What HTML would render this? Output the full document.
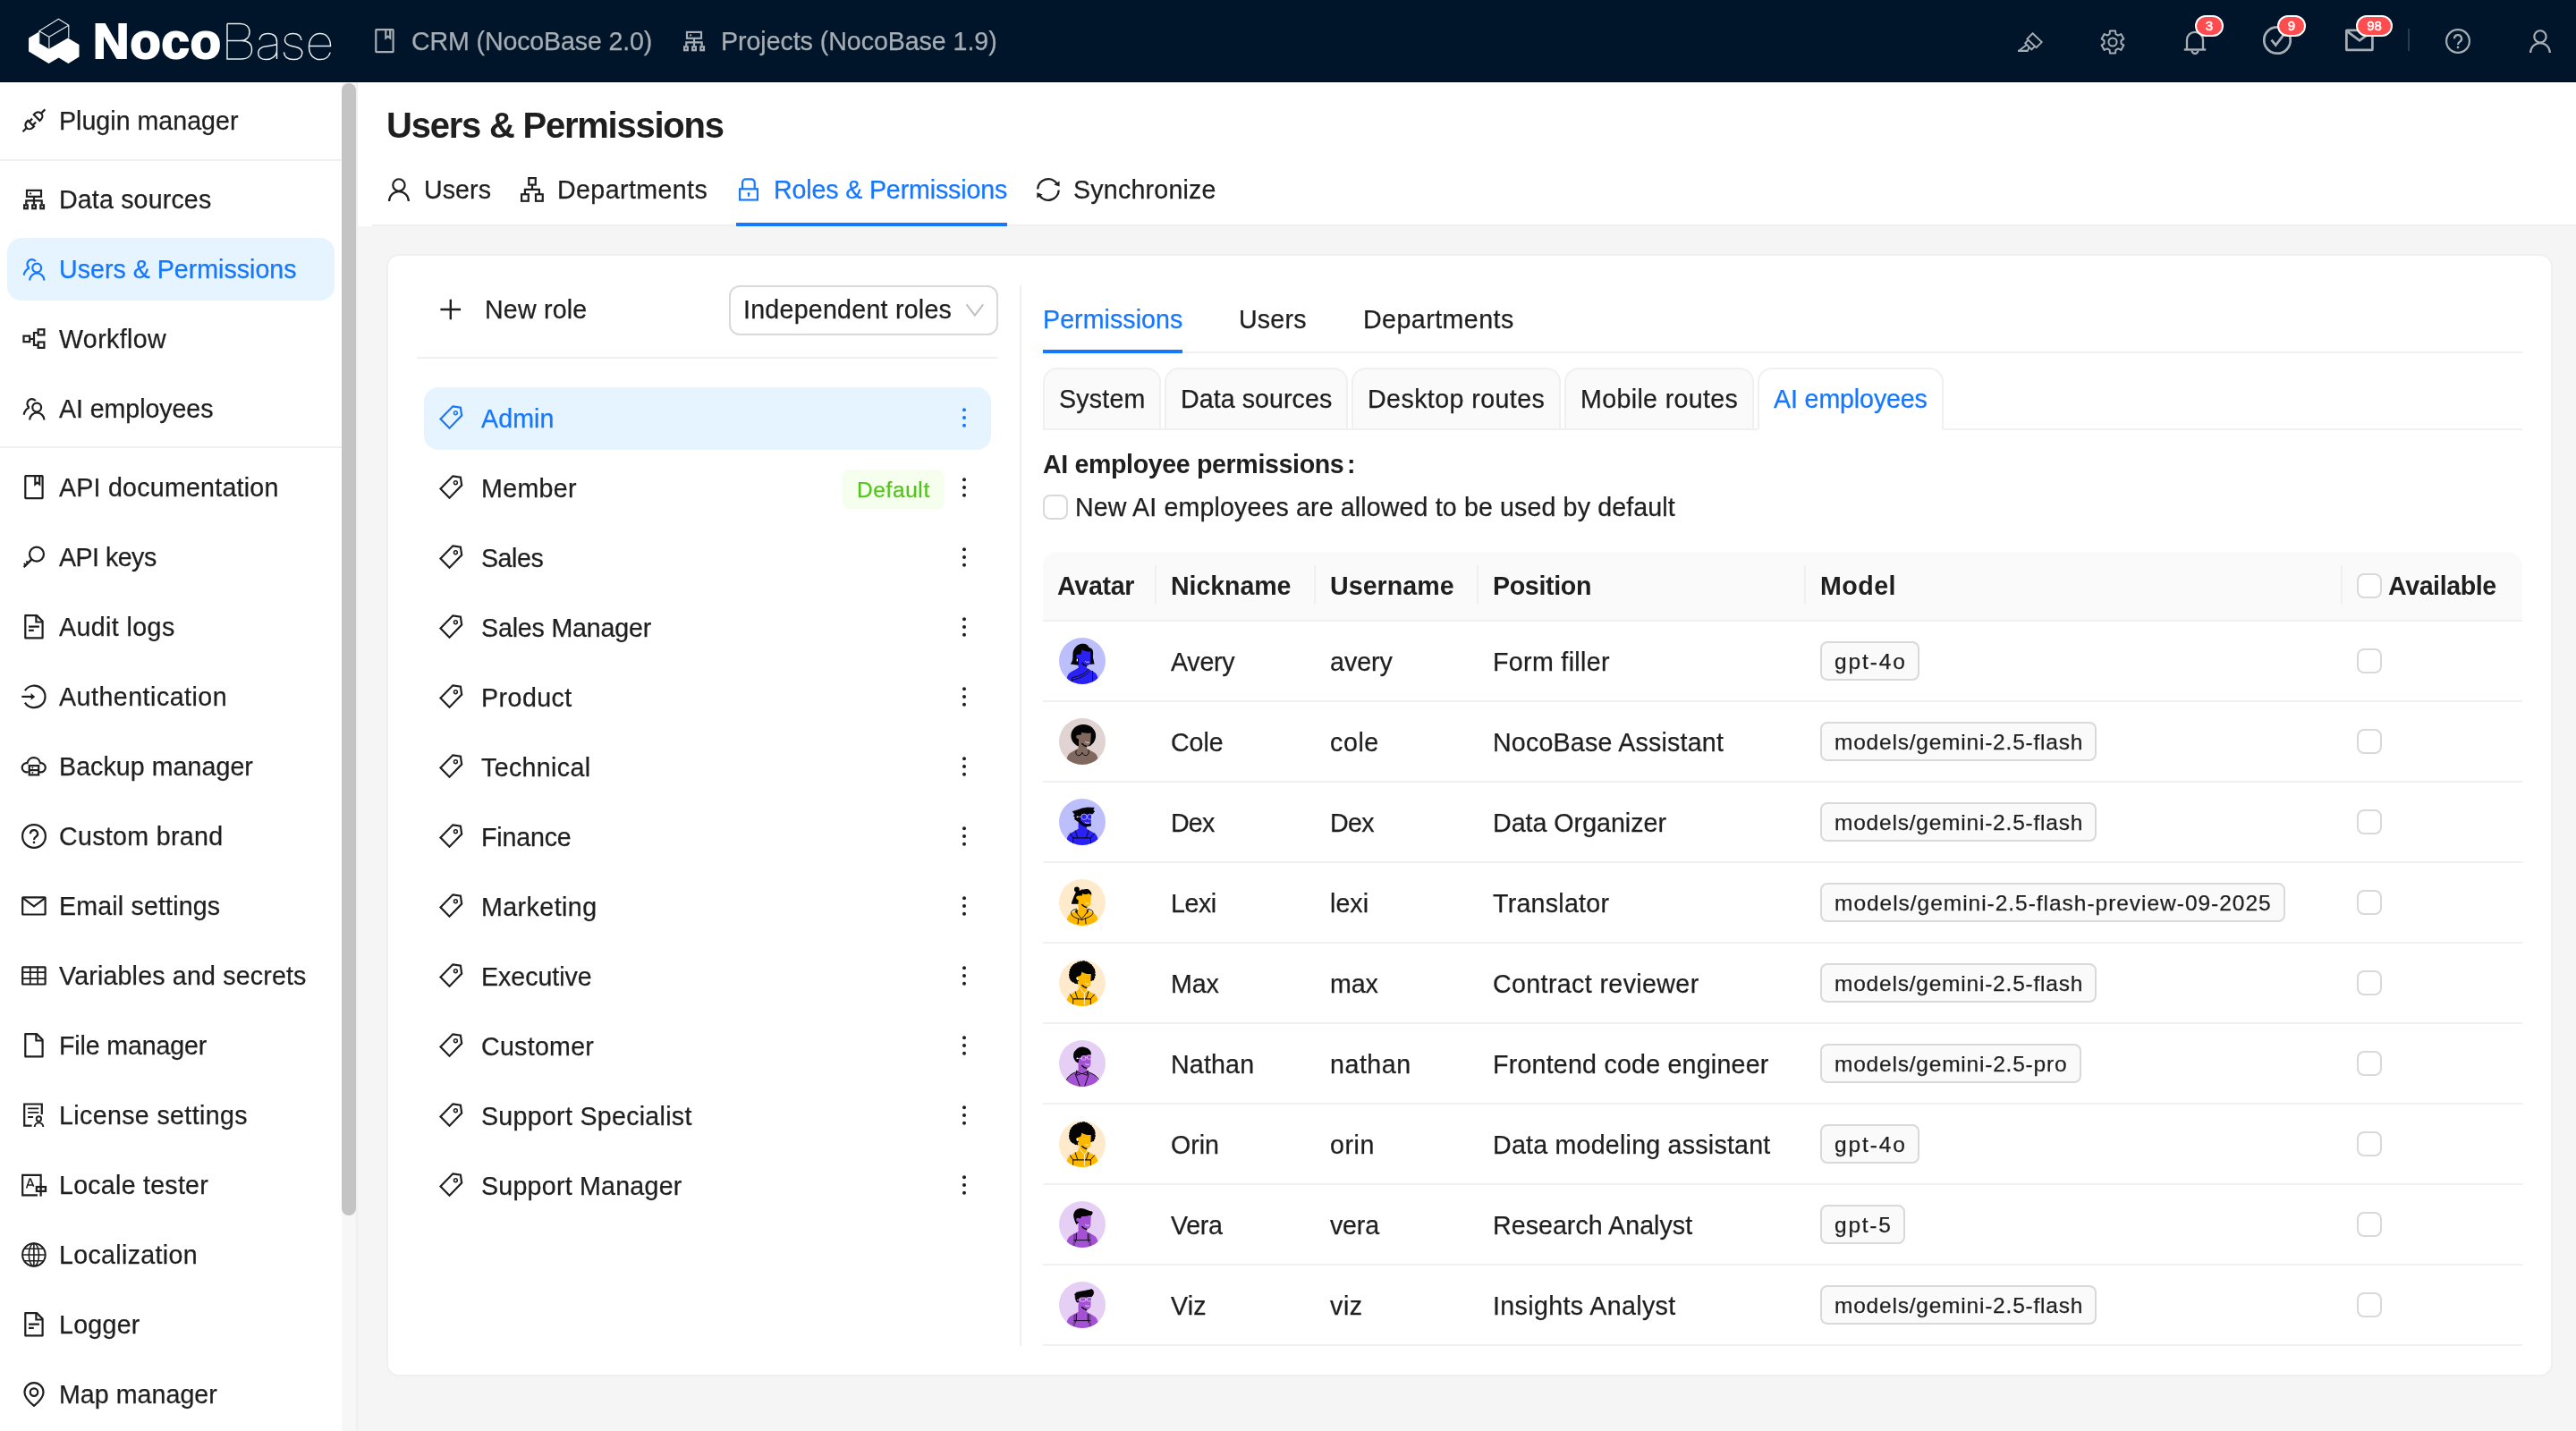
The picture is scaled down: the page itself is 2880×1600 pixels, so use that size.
<!DOCTYPE html>
<html lang="en"><head><meta charset="utf-8"><title>Users &amp; Permissions - NocoBase</title><style>
html,body{margin:0;padding:0;}
body{width:2880px;height:1600px;position:relative;overflow:hidden;background:#f5f5f5;font-family:"Liberation Sans",sans-serif;}
div,svg{position:absolute;box-sizing:border-box;}
svg{overflow:visible;}
.t{white-space:nowrap;will-change:transform;}
</style></head>
<body>
<div style="left:0px;top:0px;width:2880px;height:92px;background:#001529;"></div>
<div style="left:0px;top:91px;width:2880px;height:1px;background:#000b1d;"></div>
<svg style="left:28px;top:16px" width="64" height="60" viewBox="0 0 64 60"><path d="M4.100 26.600L15.760 19.600V32.200L26.700 38.700L47.900 26.600L60.500 34.100V47.600L48.400 55L37.650 48.500L26.500 55L4.100 41.500Z" fill="#fff"/><path d="M15.760 18.700L37.400 5.200L48.800 12.200L26.900 25.200ZM48.800 12.200V26.600M26.900 25.200V38.700M15.760 18.700V32.200" fill="none" stroke="#e3e7ea" stroke-width="1.200" stroke-linejoin="round"/></svg>
<div class="t" style="left:103.86px;top:7px;height:78px;line-height:78px;font-size:56px;color:#fff;font-weight:700;letter-spacing:0.967px;-webkit-text-stroke:2.2px #fff;">Noco</div>
<svg style="left:250px;top:20px" width="124" height="52" viewBox="0 0 124 52" fill="none" stroke="#e8ebee" stroke-width="1.500"><path d="M4 6.500V46H19.500C27 46 31.500 42 31.500 35.500C31.500 29.500 27.500 25.700 20.500 25.500H4M4 6.500H18.500C25 6.500 29 10 29 15.800C29 21.800 25 25.500 18.500 25.500"/><path d="M40 24.500C41 20 44.500 17.600 49.500 17.600C56 17.600 59.500 21 59.500 27V46M59.500 29.500C56 30.800 51.500 31.200 47.500 31.800C42 32.600 38.700 34.800 38.700 39.200C38.700 43.800 42.200 46.600 47.400 46.600C53.500 46.600 59.500 43 59.500 36"/><path d="M87 25C86.500 20.400 83 17.600 77.500 17.600C72 17.600 68.400 20.400 68.400 24.500C68.400 28.500 71 30.300 76 31.400L80.500 32.400C85.500 33.500 87.800 35.400 87.800 39.200C87.800 43.600 84 46.600 78 46.600C71.800 46.600 68 43.600 67.400 38.400"/><path d="M95.500 31.500H119.500C119.500 23 115 17.600 107.800 17.600C100.500 17.600 95.500 23.500 95.500 32.200C95.500 41 100.500 46.600 108 46.600C113.800 46.600 117.800 43.500 119.200 38.600"/></svg>
<svg style="left:416px;top:32px;color:#a6adb4;" width="28" height="28" viewBox="0 0 28 28" fill="none" stroke="currentColor" stroke-width="2.2" stroke-linecap="butt" stroke-linejoin="miter"><rect x="4.300" y="1.200" width="19.300" height="25" rx=".6"/><path d="M15.300 1.200V10.600L17.750 8.700L20.200 10.600V1.200"/></svg>
<div class="t" style="left:459.77px;top:26px;height:40px;line-height:40px;font-size:28.6px;color:#a6adb4;-webkit-text-stroke:.25px;letter-spacing:-0.141px;">CRM (NocoBase 2.0)</div>
<svg style="left:762px;top:32px;color:#a6adb4;" width="28" height="28" viewBox="0 0 28 28" fill="none" stroke="currentColor" stroke-width="2.2" stroke-linecap="butt" stroke-linejoin="miter"><rect x="6" y="3.900" width="16" height="6.900"/><circle cx="10.100" cy="7.400" r="1.100" fill="currentColor" stroke="none"/><path d="M14 10.800V15.300M5.300 19.400V15.300H22.700V19.400M14 15.300V19.400"/><rect x="3.100" y="20.300" width="3.700" height="3.900"/><rect x="12.200" y="20.300" width="3.700" height="3.900"/><rect x="21.300" y="20.300" width="3.700" height="3.900"/></svg>
<div class="t" style="left:805.91px;top:26px;height:40px;line-height:40px;font-size:28.6px;color:#a6adb4;-webkit-text-stroke:.25px;letter-spacing:-0.055px;">Projects (NocoBase 1.9)</div>
<svg style="left:2250px;top:28px;color:#a6adb4" width="40" height="36" viewBox="0 0 40 36" fill="none" stroke="currentColor" stroke-width="1.900" stroke-linejoin="miter"><path d="M22.500 9.300L32.700 19.050L26.600 25.250L16.400 15.500Z"/><path d="M17.650 16.750L14.200 20.200L21.400 27.400L24.850 23.950"/><path d="M15.600 22.300L7.800 28.300M18.200 25.200L17.300 28.300"/><path d="M6 28.850H17.700" stroke-width="2.300"/></svg>
<svg style="left:2348px;top:33px;color:#a6adb4;" width="28" height="28" viewBox="0 0 28 28" fill="none" stroke="currentColor" stroke-width="2" stroke-linecap="butt" stroke-linejoin="miter"><path d="M10.62 5.02L10.93 1.47L17.07 1.47L17.38 5.02L20.09 6.58L23.32 5.08L26.38 10.39L23.47 12.44L23.47 15.56L26.38 17.61L23.32 22.92L20.09 21.42L17.38 22.98L17.07 26.53L10.93 26.53L10.62 22.98L7.91 21.42L4.68 22.92L1.62 17.61L4.53 15.56L4.53 12.44L1.62 10.39L4.68 5.08L7.91 6.58Z" stroke-linejoin="round"/><circle cx="14" cy="14" r="4.600"/></svg>
<svg style="left:2440px;top:32px;color:#a6adb4;" width="28" height="28" viewBox="0 0 28 28" fill="none" stroke="currentColor" stroke-width="2.3" stroke-linecap="butt" stroke-linejoin="miter"><path d="M5 23.300V12.800a9 9 0 0 1 18 0V23.300"/><path d="M1.800 23.500H26.200" stroke-width="2.400"/><path d="M10.600 24.600a3.400 3.400 0 0 0 6.800 0"/></svg>
<svg style="left:2530px;top:29px;color:#a6adb4;" width="32" height="32" viewBox="0 0 28 28" fill="none" stroke="currentColor" stroke-width="2.4" stroke-linecap="butt" stroke-linejoin="miter"><circle cx="14" cy="14" r="12.900"/><path d="M8.300 13.600L12.500 18.800L20.300 8.700"/></svg>
<svg style="left:2622px;top:29px;color:#a6adb4;" width="32" height="32" viewBox="0 0 28 28" fill="none" stroke="currentColor" stroke-width="2.4" stroke-linecap="butt" stroke-linejoin="miter"><rect x="1.200" y="4.300" width="25.400" height="19.200" rx=".5"/><path d="M2 5.300L14 14.300L26 5.300"/></svg>
<div style="left:2692px;top:32px;width:2px;height:25px;background:#2b3a4c;"></div>
<svg style="left:2734px;top:32px;color:#a6adb4;" width="28" height="28" viewBox="0 0 28 28" fill="none" stroke="currentColor" stroke-width="2.2" stroke-linecap="butt" stroke-linejoin="miter"><circle cx="14" cy="14" r="12.900"/><path d="M9.900 11.200a4.100 4.100 0 1 1 6.100 3.600c-1.300.8-1.900 1.500-1.900 2.900v.4"/><circle cx="14" cy="20.900" r="1.300" fill="currentColor" stroke="none"/></svg>
<svg style="left:2826px;top:32px;color:#a6adb4;" width="28" height="28" viewBox="0 0 28 28" fill="none" stroke="currentColor" stroke-width="2.2" stroke-linecap="butt" stroke-linejoin="miter"><circle cx="13.950" cy="8.900" r="6.650"/><path d="M3.100 27A10.850 10.850 0 0 1 24.800 27"/></svg>
<div style="left:2454px;top:17px;width:32px;height:24px;background:#ff4d4f;border:2px solid #fff;border-radius:12px;"></div>
<div class="t" style="left:2454px;top:19px;width:32px;height:20px;line-height:20px;text-align:center;font-size:15px;font-weight:400;-webkit-text-stroke:.5px #fff;color:#fff;">3</div>
<div style="left:2546px;top:17px;width:32px;height:24px;background:#ff4d4f;border:2px solid #fff;border-radius:12px;"></div>
<div class="t" style="left:2546px;top:19px;width:32px;height:20px;line-height:20px;text-align:center;font-size:15px;font-weight:400;-webkit-text-stroke:.5px #fff;color:#fff;">9</div>
<div style="left:2634px;top:17px;width:41px;height:24px;background:#ff4d4f;border:2px solid #fff;border-radius:12px;"></div>
<div class="t" style="left:2634px;top:19px;width:41px;height:20px;line-height:20px;text-align:center;font-size:15px;font-weight:400;-webkit-text-stroke:.5px #fff;color:#fff;">98</div>
<div style="left:0px;top:92px;width:400px;height:1508px;background:#fff;"></div>
<div style="left:382px;top:92px;width:16px;height:1508px;background:#f7f7f7;"></div>
<div style="left:398px;top:92px;width:2px;height:1508px;background:#efefef;"></div>
<div style="left:382px;top:93px;width:16px;height:1266px;background:#c4c4c4;border-radius:8px;"></div>
<div style="left:0px;top:178px;width:382px;height:2px;background:#f0f0f0;"></div>
<div style="left:0px;top:499px;width:382px;height:2px;background:#f0f0f0;"></div>
<svg style="left:24px;top:121px;color:#1f1f1f;" width="28" height="28" viewBox="0 0 28 28" fill="none" stroke="currentColor" stroke-width="2.2" stroke-linecap="butt" stroke-linejoin="miter"><g transform="translate(13.9 13.8) rotate(-45)"><path d="M4.600 -4.700V4.700H6.600A4.900 4.700 0 0 0 6.600 -4.700Z"/><path d="M-4.600 -4.700V4.700H-6.600A4.900 4.700 0 0 1 -6.600 -4.700Z"/><path d="M12.300 0H17.600M-12.300 0H-17.600M-4.600 -2.800H0.300M-4.600 2.800H0.300"/></g></svg>
<div class="t" style="left:65.80px;top:115px;height:40px;line-height:40px;font-size:28.6px;color:#1f1f1f;-webkit-text-stroke:.25px;letter-spacing:0.010px;">Plugin manager</div>
<svg style="left:24px;top:209px;color:#1f1f1f;" width="28" height="28" viewBox="0 0 28 28" fill="none" stroke="currentColor" stroke-width="2.2" stroke-linecap="butt" stroke-linejoin="miter"><rect x="6" y="3.900" width="16" height="6.900"/><circle cx="10.100" cy="7.400" r="1.100" fill="currentColor" stroke="none"/><path d="M14 10.800V15.300M5.300 19.400V15.300H22.700V19.400M14 15.300V19.400"/><rect x="3.100" y="20.300" width="3.700" height="3.900"/><rect x="12.200" y="20.300" width="3.700" height="3.900"/><rect x="21.300" y="20.300" width="3.700" height="3.900"/></svg>
<div class="t" style="left:65.80px;top:203px;height:40px;line-height:40px;font-size:28.6px;color:#1f1f1f;-webkit-text-stroke:.25px;letter-spacing:0.159px;">Data sources</div>
<div style="left:8px;top:266px;width:366px;height:70px;background:#e6f4ff;border-radius:16px;"></div>
<svg style="left:24px;top:287px;color:#1677ff;" width="28" height="28" viewBox="0 0 28 28" fill="none" stroke="currentColor" stroke-width="2.2" stroke-linecap="butt" stroke-linejoin="miter"><circle cx="17.200" cy="12.600" r="4.900"/><path d="M9.200 26.600a8.100 8.100 0 0 1 16.200 0"/><path d="M15.800 5.200A5.200 5.200 0 1 0 8.700 12.600"/><path d="M8.800 12.500C5.400 14.200 3.300 17 2.700 20.700"/></svg>
<div class="t" style="left:65.80px;top:281px;height:40px;line-height:40px;font-size:28.6px;color:#1677ff;-webkit-text-stroke:.25px;letter-spacing:0.011px;">Users &amp; Permissions</div>
<svg style="left:24px;top:365px;color:#1f1f1f;" width="28" height="28" viewBox="0 0 28 28" fill="none" stroke="currentColor" stroke-width="2.2" stroke-linecap="butt" stroke-linejoin="miter"><rect x="2.500" y="10.650" width="6.700" height="6.500"/><path d="M9.200 14H14M18.700 7H14V20.800H18.700"/><rect x="18.700" y="3.300" width="6.700" height="6.200"/><rect x="18.700" y="17.500" width="6.700" height="6.400"/></svg>
<div class="t" style="left:65.80px;top:359px;height:40px;line-height:40px;font-size:28.6px;color:#1f1f1f;-webkit-text-stroke:.25px;letter-spacing:0.383px;">Workflow</div>
<svg style="left:24px;top:443px;color:#1f1f1f;" width="28" height="28" viewBox="0 0 28 28" fill="none" stroke="currentColor" stroke-width="2.2" stroke-linecap="butt" stroke-linejoin="miter"><circle cx="17.200" cy="12.600" r="4.900"/><path d="M9.200 26.600a8.100 8.100 0 0 1 16.200 0"/><path d="M15.800 5.200A5.200 5.200 0 1 0 8.700 12.600"/><path d="M8.800 12.500C5.400 14.200 3.300 17 2.700 20.700"/></svg>
<div class="t" style="left:65.80px;top:437px;height:40px;line-height:40px;font-size:28.6px;color:#1f1f1f;-webkit-text-stroke:.25px;letter-spacing:-0.074px;">AI employees</div>
<svg style="left:24px;top:531px;color:#1f1f1f;" width="28" height="28" viewBox="0 0 28 28" fill="none" stroke="currentColor" stroke-width="2.2" stroke-linecap="butt" stroke-linejoin="miter"><rect x="4.300" y="1.200" width="19.300" height="25" rx=".6"/><path d="M15.300 1.200V10.600L17.750 8.700L20.200 10.600V1.200"/></svg>
<div class="t" style="left:65.80px;top:525px;height:40px;line-height:40px;font-size:28.6px;color:#1f1f1f;-webkit-text-stroke:.25px;letter-spacing:0.234px;">API documentation</div>
<svg style="left:24px;top:609px;color:#1f1f1f;" width="28" height="28" viewBox="0 0 28 28" fill="none" stroke="currentColor" stroke-width="2.2" stroke-linecap="butt" stroke-linejoin="miter"><circle cx="17" cy="10.600" r="8"/><path d="M11.200 16.600L2.600 25.200" stroke-width="2.500"/><path d="M7.400 20.500L5.300 18.400M4.900 23L2.800 20.900" stroke-width="1.900"/></svg>
<div class="t" style="left:65.80px;top:603px;height:40px;line-height:40px;font-size:28.6px;color:#1f1f1f;-webkit-text-stroke:.25px;letter-spacing:-0.518px;">API keys</div>
<svg style="left:24px;top:687px;color:#1f1f1f;" width="28" height="28" viewBox="0 0 28 28" fill="none" stroke="currentColor" stroke-width="2.2" stroke-linecap="butt" stroke-linejoin="miter"><path d="M4.300 1.100H17.100L23.600 7.600V26.300H4.300Z" stroke-linejoin="round"/><path d="M16.400 1.400V8.500H23.400"/><path d="M8 13.600H19.900M8 17.900H13.800"/></svg>
<div class="t" style="left:65.80px;top:681px;height:40px;line-height:40px;font-size:28.6px;color:#1f1f1f;-webkit-text-stroke:.25px;letter-spacing:0.405px;">Audit logs</div>
<svg style="left:24px;top:765px;color:#1f1f1f;" width="28" height="28" viewBox="0 0 28 28" fill="none" stroke="currentColor" stroke-width="2.2" stroke-linecap="butt" stroke-linejoin="miter"><path d="M3.900 7.200A12.300 12.300 0 1 1 3.900 20.600"/><path d="M0.300 13.900H12"/><path d="M10.600 10.100L15.200 13.900L10.600 17.700Z" fill="currentColor" stroke="none"/></svg>
<div class="t" style="left:65.80px;top:759px;height:40px;line-height:40px;font-size:28.6px;color:#1f1f1f;-webkit-text-stroke:.25px;letter-spacing:0.495px;">Authentication</div>
<svg style="left:24px;top:843px;color:#1f1f1f;" width="28" height="28" viewBox="0 0 28 28" fill="none" stroke="currentColor" stroke-width="2.2" stroke-linecap="butt" stroke-linejoin="miter"><path d="M7.600 20.200H7A5.100 5.100 0 1 1 6.500 10.200A7.350 7.350 0 0 1 21 10.200A5.100 5.100 0 1 1 20.500 20.200H19.900"/><rect x="8.750" y="13.100" width="10.450" height="10.300"/><path d="M8.750 18.100H19.200"/><circle cx="12.400" cy="15.500" r=".9" fill="currentColor" stroke="none"/><circle cx="12.400" cy="20.900" r=".9" fill="currentColor" stroke="none"/></svg>
<div class="t" style="left:65.80px;top:837px;height:40px;line-height:40px;font-size:28.6px;color:#1f1f1f;-webkit-text-stroke:.25px;letter-spacing:0.055px;">Backup manager</div>
<svg style="left:24px;top:921px;color:#1f1f1f;" width="28" height="28" viewBox="0 0 28 28" fill="none" stroke="currentColor" stroke-width="2.2" stroke-linecap="butt" stroke-linejoin="miter"><circle cx="14" cy="14" r="12.900"/><path d="M9.900 11.200a4.100 4.100 0 1 1 6.100 3.600c-1.300.8-1.900 1.500-1.900 2.900v.4"/><circle cx="14" cy="20.900" r="1.300" fill="currentColor" stroke="none"/></svg>
<div class="t" style="left:65.80px;top:915px;height:40px;line-height:40px;font-size:28.6px;color:#1f1f1f;-webkit-text-stroke:.25px;letter-spacing:0.319px;">Custom brand</div>
<svg style="left:24px;top:999px;color:#1f1f1f;" width="28" height="28" viewBox="0 0 28 28" fill="none" stroke="currentColor" stroke-width="2.2" stroke-linecap="butt" stroke-linejoin="miter"><rect x="1.200" y="4.300" width="25.400" height="19.200" rx=".5"/><path d="M2 5.300L14 14.300L26 5.300"/></svg>
<div class="t" style="left:65.80px;top:993px;height:40px;line-height:40px;font-size:28.6px;color:#1f1f1f;-webkit-text-stroke:.25px;letter-spacing:0.167px;">Email settings</div>
<svg style="left:24px;top:1077px;color:#1f1f1f;" width="28" height="28" viewBox="0 0 28 28" fill="none" stroke="currentColor" stroke-width="2.2" stroke-linecap="butt" stroke-linejoin="miter"><rect x="1.200" y="4.300" width="25.400" height="19.200" rx=".5"/><path d="M1.200 10.200H26.600M1.200 17.200H26.600M9.800 4.300V23.500M18.150 4.300V23.500" stroke-width="1.800"/></svg>
<div class="t" style="left:65.80px;top:1071px;height:40px;line-height:40px;font-size:28.6px;color:#1f1f1f;-webkit-text-stroke:.25px;letter-spacing:0.178px;">Variables and secrets</div>
<svg style="left:24px;top:1155px;color:#1f1f1f;" width="28" height="28" viewBox="0 0 28 28" fill="none" stroke="currentColor" stroke-width="2.2" stroke-linecap="butt" stroke-linejoin="miter"><path d="M4.300 1.100H17.100L23.600 7.600V26.300H4.300Z" stroke-linejoin="round"/><path d="M16.400 1.400V8.500H23.400"/></svg>
<div class="t" style="left:65.80px;top:1149px;height:40px;line-height:40px;font-size:28.6px;color:#1f1f1f;-webkit-text-stroke:.25px;letter-spacing:-0.154px;">File manager</div>
<svg style="left:24px;top:1233px;color:#1f1f1f;" width="28" height="28" viewBox="0 0 28 28" fill="none" stroke="currentColor" stroke-width="2.2" stroke-linecap="butt" stroke-linejoin="miter"><path d="M11.600 25.600H3.200V1.500H22.800V13"/><path d="M7.100 6.400H19.300M7.100 10.900H19.300M7.100 16H13" stroke-width="1.900"/><circle cx="19.400" cy="18" r="2.700" stroke-width="1.900"/><path d="M14.700 27A4.800 4.800 0 0 1 24.300 27" stroke-width="1.900"/></svg>
<div class="t" style="left:65.80px;top:1227px;height:40px;line-height:40px;font-size:28.6px;color:#1f1f1f;-webkit-text-stroke:.25px;letter-spacing:0.363px;">License settings</div>
<svg style="left:24px;top:1311px;color:#1f1f1f;" width="28" height="28" viewBox="0 0 28 28" fill="none" stroke="currentColor" stroke-width="2.2" stroke-linecap="butt" stroke-linejoin="miter"><path d="M17.900 25.450H1.200V2.900H21.650V10.500"/><path d="M5.600 17.400L9.300 7H10.100L13.600 15.600M7 14H13" stroke-width="1.600"/><rect x="16.900" y="16.050" width="10.100" height="4.800" stroke-width="2.300"/><path d="M21.650 10.500V26.600" stroke-width="2.300"/></svg>
<div class="t" style="left:65.80px;top:1305px;height:40px;line-height:40px;font-size:28.6px;color:#1f1f1f;-webkit-text-stroke:.25px;letter-spacing:0.254px;">Locale tester</div>
<svg style="left:24px;top:1389px;color:#1f1f1f;" width="28" height="28" viewBox="0 0 28 28" fill="none" stroke="currentColor" stroke-width="2.2" stroke-linecap="butt" stroke-linejoin="miter"><circle cx="13.900" cy="14" r="12.800" stroke-width="2"/><ellipse cx="13.900" cy="14" rx="5.600" ry="12.800" stroke-width="1.600"/><path d="M1.100 14H26.700M3.200 7.300H24.600M3.200 20.700H24.600M13.900 1.200V26.800" stroke-width="1.600"/></svg>
<div class="t" style="left:65.80px;top:1383px;height:40px;line-height:40px;font-size:28.6px;color:#1f1f1f;-webkit-text-stroke:.25px;letter-spacing:0.328px;">Localization</div>
<svg style="left:24px;top:1467px;color:#1f1f1f;" width="28" height="28" viewBox="0 0 28 28" fill="none" stroke="currentColor" stroke-width="2.2" stroke-linecap="butt" stroke-linejoin="miter"><path d="M4.300 1.100H17.100L23.600 7.600V26.300H4.300Z" stroke-linejoin="round"/><path d="M16.400 1.400V8.500H23.400"/><path d="M8 13.600H19.900M8 17.900H13.800"/></svg>
<div class="t" style="left:65.80px;top:1461px;height:40px;line-height:40px;font-size:28.6px;color:#1f1f1f;-webkit-text-stroke:.25px;letter-spacing:0.268px;">Logger</div>
<svg style="left:24px;top:1545px;color:#1f1f1f;" width="28" height="28" viewBox="0 0 28 28" fill="none" stroke="currentColor" stroke-width="2.2" stroke-linecap="butt" stroke-linejoin="miter"><path d="M14 26.900C8 22 3.450 17.500 3.450 11.700A10.550 10.550 0 0 1 24.550 11.700C24.550 17.500 20 22 14 26.900Z" stroke-linejoin="round"/><circle cx="14" cy="11.600" r="4.250"/></svg>
<div class="t" style="left:65.80px;top:1539px;height:40px;line-height:40px;font-size:28.6px;color:#1f1f1f;-webkit-text-stroke:.25px;letter-spacing:0.037px;">Map manager</div>
<div style="left:400px;top:92px;width:2480px;height:161px;background:#fff;"></div>
<div style="left:416px;top:251px;width:2464px;height:2px;background:#f0f0f0;"></div>
<div class="t" style="left:431.60px;top:112px;height:56px;line-height:56px;font-size:40px;color:#1f1f1f;font-weight:700;letter-spacing:-1.233px;">Users &amp; Permissions</div>
<svg style="left:432px;top:198px;color:#1f1f1f;" width="28" height="28" viewBox="0 0 28 28" fill="none" stroke="currentColor" stroke-width="2.2" stroke-linecap="butt" stroke-linejoin="miter"><circle cx="13.950" cy="8.900" r="6.650"/><path d="M3.100 27A10.850 10.850 0 0 1 24.800 27"/></svg>
<div class="t" style="left:473.70px;top:192px;height:40px;line-height:40px;font-size:28.6px;color:#1f1f1f;-webkit-text-stroke:.25px;letter-spacing:0.064px;">Users</div>
<svg style="left:581px;top:198px;color:#1f1f1f;" width="28" height="28" viewBox="0 0 28 28" fill="none" stroke="currentColor" stroke-width="2.2" stroke-linecap="butt" stroke-linejoin="miter"><rect x="10.250" y="1.100" width="7.500" height="7.500"/><rect x="2.100" y="19.260" width="7.660" height="7.500"/><rect x="18" y="19.260" width="7.750" height="7.500"/><path d="M14 8.600V13.900M5.930 19.260V13.900H21.870V19.260"/></svg>
<div class="t" style="left:622.70px;top:192px;height:40px;line-height:40px;font-size:28.6px;color:#1f1f1f;-webkit-text-stroke:.25px;letter-spacing:0.407px;">Departments</div>
<svg style="left:823px;top:198px;color:#1677ff;" width="28" height="28" viewBox="0 0 28 28" fill="none" stroke="currentColor" stroke-width="2.2" stroke-linecap="butt" stroke-linejoin="miter"><rect x="4.100" y="13.300" width="19.800" height="12.200"/><path d="M7.050 13.300V6A3.650 3.650 0 0 1 10.700 2.350H17.050A3.650 3.650 0 0 1 20.700 6V13.300"/><circle cx="14.050" cy="18.600" r="1.500" fill="currentColor" stroke="none"/><path d="M14.050 18.600V21.800" stroke-width="2"/></svg>
<div class="t" style="left:864.70px;top:192px;height:40px;line-height:40px;font-size:28.6px;color:#1677ff;-webkit-text-stroke:.25px;letter-spacing:-0.141px;">Roles &amp; Permissions</div>
<div style="left:823px;top:249px;width:303px;height:4px;background:#1677ff;"></div>
<svg style="left:1158px;top:198px;color:#1f1f1f;" width="28" height="28" viewBox="0 0 28 28" fill="none" stroke="currentColor" stroke-width="2.2" stroke-linecap="butt" stroke-linejoin="miter"><path d="M2.170 13.330A11.800 11.800 0 0 1 23.600 7.180" stroke-width="2.400"/><path d="M25.730 14.570A11.800 11.800 0 0 1 4.300 20.720" stroke-width="2.400"/><path d="M26.550 4.400V10.600L20.300 8.400Z" fill="currentColor" stroke="none"/><path d="M1.350 23.500V17.300L7.600 19.500Z" fill="currentColor" stroke="none"/></svg>
<div class="t" style="left:1199.70px;top:192px;height:40px;line-height:40px;font-size:28.6px;color:#1f1f1f;-webkit-text-stroke:.25px;letter-spacing:0.214px;">Synchronize</div>
<div style="left:432px;top:284px;width:2422px;height:1255px;background:#fff;border:2px solid #f0f0f0;border-radius:14px;"></div>
<svg style="left:490px;top:332px;color:#1f1f1f;" width="28" height="28" viewBox="0 0 28 28" fill="none" stroke="currentColor" stroke-width="2.4" stroke-linecap="butt" stroke-linejoin="miter"><path d="M13.800 2.700V25.300M2.400 14H25.100"/></svg>
<div class="t" style="left:541.91px;top:326px;height:40px;line-height:40px;font-size:28.6px;color:#1f1f1f;-webkit-text-stroke:.25px;letter-spacing:0.201px;">New role</div>
<div style="left:815px;top:319px;width:301px;height:56px;background:#fff;border:2px solid #d9d9d9;border-radius:12px;"></div>
<div class="t" style="left:830.63px;top:326px;height:40px;line-height:40px;font-size:28.6px;color:#1f1f1f;-webkit-text-stroke:.25px;letter-spacing:0.246px;">Independent roles</div>
<svg style="left:1076px;top:336px" width="28" height="22" viewBox="0 0 28 22" fill="none" stroke="#bfbfbf" stroke-width="2"><path d="M4.600 4.400L13.900 16.700L23.200 4.400"/></svg>
<div style="left:466px;top:399px;width:650px;height:2px;background:#f0f0f0;"></div>
<div style="left:1140px;top:319px;width:2px;height:1186px;background:#f0f0f0;"></div>
<div style="left:474px;top:433px;width:634px;height:70px;background:#e6f4ff;border-radius:16px;"></div>
<svg style="left:490px;top:453px;color:#1677ff;" width="28" height="28" viewBox="0 0 28 28" fill="none" stroke="currentColor" stroke-width="2.2" stroke-linecap="butt" stroke-linejoin="miter"><path d="M2.500 15.400L16.300 1.300L24.900 2.600L26.200 11.600L12.500 25.700Z" stroke-linejoin="miter"/><circle cx="19.400" cy="8.750" r="1.900" stroke-width="1.500"/></svg>
<div class="t" style="left:537.80px;top:448px;height:40px;line-height:40px;font-size:28.6px;color:#1677ff;-webkit-text-stroke:.25px;letter-spacing:0.109px;">Admin</div>
<svg style="left:1064px;top:453px;color:#1677ff;" width="28" height="28" viewBox="0 0 28 28" fill="none" stroke="currentColor" stroke-width="2.2" stroke-linecap="butt" stroke-linejoin="miter"><circle cx="14" cy="5.300" r="2" fill="currentColor" stroke="none"/><circle cx="14" cy="14" r="2" fill="currentColor" stroke="none"/><circle cx="14" cy="22.700" r="2" fill="currentColor" stroke="none"/></svg>
<svg style="left:490px;top:531px;color:#1f1f1f;" width="28" height="28" viewBox="0 0 28 28" fill="none" stroke="currentColor" stroke-width="2.2" stroke-linecap="butt" stroke-linejoin="miter"><path d="M2.500 15.400L16.300 1.300L24.900 2.600L26.200 11.600L12.500 25.700Z" stroke-linejoin="miter"/><circle cx="19.400" cy="8.750" r="1.900" stroke-width="1.500"/></svg>
<div class="t" style="left:537.80px;top:526px;height:40px;line-height:40px;font-size:28.6px;color:#1f1f1f;-webkit-text-stroke:.25px;letter-spacing:0.353px;">Member</div>
<svg style="left:1064px;top:531px;color:#1f1f1f;" width="28" height="28" viewBox="0 0 28 28" fill="none" stroke="currentColor" stroke-width="2.2" stroke-linecap="butt" stroke-linejoin="miter"><circle cx="14" cy="5.300" r="2" fill="currentColor" stroke="none"/><circle cx="14" cy="14" r="2" fill="currentColor" stroke="none"/><circle cx="14" cy="22.700" r="2" fill="currentColor" stroke="none"/></svg>
<div style="left:942px;top:525px;width:114px;height:44px;background:#f6ffed;border-radius:8px;"></div>
<div class="t" style="left:958.05px;top:531px;height:34px;line-height:34px;font-size:24.4px;color:#52c41a;-webkit-text-stroke:.25px;letter-spacing:0.654px;">Default</div>
<svg style="left:490px;top:609px;color:#1f1f1f;" width="28" height="28" viewBox="0 0 28 28" fill="none" stroke="currentColor" stroke-width="2.2" stroke-linecap="butt" stroke-linejoin="miter"><path d="M2.500 15.400L16.300 1.300L24.900 2.600L26.200 11.600L12.500 25.700Z" stroke-linejoin="miter"/><circle cx="19.400" cy="8.750" r="1.900" stroke-width="1.500"/></svg>
<div class="t" style="left:537.80px;top:604px;height:40px;line-height:40px;font-size:28.6px;color:#1f1f1f;-webkit-text-stroke:.25px;letter-spacing:-0.450px;">Sales</div>
<svg style="left:1064px;top:609px;color:#1f1f1f;" width="28" height="28" viewBox="0 0 28 28" fill="none" stroke="currentColor" stroke-width="2.2" stroke-linecap="butt" stroke-linejoin="miter"><circle cx="14" cy="5.300" r="2" fill="currentColor" stroke="none"/><circle cx="14" cy="14" r="2" fill="currentColor" stroke="none"/><circle cx="14" cy="22.700" r="2" fill="currentColor" stroke="none"/></svg>
<svg style="left:490px;top:687px;color:#1f1f1f;" width="28" height="28" viewBox="0 0 28 28" fill="none" stroke="currentColor" stroke-width="2.2" stroke-linecap="butt" stroke-linejoin="miter"><path d="M2.500 15.400L16.300 1.300L24.900 2.600L26.200 11.600L12.500 25.700Z" stroke-linejoin="miter"/><circle cx="19.400" cy="8.750" r="1.900" stroke-width="1.500"/></svg>
<div class="t" style="left:537.80px;top:682px;height:40px;line-height:40px;font-size:28.6px;color:#1f1f1f;-webkit-text-stroke:.25px;letter-spacing:-0.171px;">Sales Manager</div>
<svg style="left:1064px;top:687px;color:#1f1f1f;" width="28" height="28" viewBox="0 0 28 28" fill="none" stroke="currentColor" stroke-width="2.2" stroke-linecap="butt" stroke-linejoin="miter"><circle cx="14" cy="5.300" r="2" fill="currentColor" stroke="none"/><circle cx="14" cy="14" r="2" fill="currentColor" stroke="none"/><circle cx="14" cy="22.700" r="2" fill="currentColor" stroke="none"/></svg>
<svg style="left:490px;top:765px;color:#1f1f1f;" width="28" height="28" viewBox="0 0 28 28" fill="none" stroke="currentColor" stroke-width="2.2" stroke-linecap="butt" stroke-linejoin="miter"><path d="M2.500 15.400L16.300 1.300L24.900 2.600L26.200 11.600L12.500 25.700Z" stroke-linejoin="miter"/><circle cx="19.400" cy="8.750" r="1.900" stroke-width="1.500"/></svg>
<div class="t" style="left:537.80px;top:760px;height:40px;line-height:40px;font-size:28.6px;color:#1f1f1f;-webkit-text-stroke:.25px;letter-spacing:0.462px;">Product</div>
<svg style="left:1064px;top:765px;color:#1f1f1f;" width="28" height="28" viewBox="0 0 28 28" fill="none" stroke="currentColor" stroke-width="2.2" stroke-linecap="butt" stroke-linejoin="miter"><circle cx="14" cy="5.300" r="2" fill="currentColor" stroke="none"/><circle cx="14" cy="14" r="2" fill="currentColor" stroke="none"/><circle cx="14" cy="22.700" r="2" fill="currentColor" stroke="none"/></svg>
<svg style="left:490px;top:843px;color:#1f1f1f;" width="28" height="28" viewBox="0 0 28 28" fill="none" stroke="currentColor" stroke-width="2.2" stroke-linecap="butt" stroke-linejoin="miter"><path d="M2.500 15.400L16.300 1.300L24.900 2.600L26.200 11.600L12.500 25.700Z" stroke-linejoin="miter"/><circle cx="19.400" cy="8.750" r="1.900" stroke-width="1.500"/></svg>
<div class="t" style="left:537.80px;top:838px;height:40px;line-height:40px;font-size:28.6px;color:#1f1f1f;-webkit-text-stroke:.25px;letter-spacing:0.350px;">Technical</div>
<svg style="left:1064px;top:843px;color:#1f1f1f;" width="28" height="28" viewBox="0 0 28 28" fill="none" stroke="currentColor" stroke-width="2.2" stroke-linecap="butt" stroke-linejoin="miter"><circle cx="14" cy="5.300" r="2" fill="currentColor" stroke="none"/><circle cx="14" cy="14" r="2" fill="currentColor" stroke="none"/><circle cx="14" cy="22.700" r="2" fill="currentColor" stroke="none"/></svg>
<svg style="left:490px;top:921px;color:#1f1f1f;" width="28" height="28" viewBox="0 0 28 28" fill="none" stroke="currentColor" stroke-width="2.2" stroke-linecap="butt" stroke-linejoin="miter"><path d="M2.500 15.400L16.300 1.300L24.900 2.600L26.200 11.600L12.500 25.700Z" stroke-linejoin="miter"/><circle cx="19.400" cy="8.750" r="1.900" stroke-width="1.500"/></svg>
<div class="t" style="left:537.80px;top:916px;height:40px;line-height:40px;font-size:28.6px;color:#1f1f1f;-webkit-text-stroke:.25px;letter-spacing:-0.172px;">Finance</div>
<svg style="left:1064px;top:921px;color:#1f1f1f;" width="28" height="28" viewBox="0 0 28 28" fill="none" stroke="currentColor" stroke-width="2.2" stroke-linecap="butt" stroke-linejoin="miter"><circle cx="14" cy="5.300" r="2" fill="currentColor" stroke="none"/><circle cx="14" cy="14" r="2" fill="currentColor" stroke="none"/><circle cx="14" cy="22.700" r="2" fill="currentColor" stroke="none"/></svg>
<svg style="left:490px;top:999px;color:#1f1f1f;" width="28" height="28" viewBox="0 0 28 28" fill="none" stroke="currentColor" stroke-width="2.2" stroke-linecap="butt" stroke-linejoin="miter"><path d="M2.500 15.400L16.300 1.300L24.900 2.600L26.200 11.600L12.500 25.700Z" stroke-linejoin="miter"/><circle cx="19.400" cy="8.750" r="1.900" stroke-width="1.500"/></svg>
<div class="t" style="left:537.80px;top:994px;height:40px;line-height:40px;font-size:28.6px;color:#1f1f1f;-webkit-text-stroke:.25px;letter-spacing:0.445px;">Marketing</div>
<svg style="left:1064px;top:999px;color:#1f1f1f;" width="28" height="28" viewBox="0 0 28 28" fill="none" stroke="currentColor" stroke-width="2.2" stroke-linecap="butt" stroke-linejoin="miter"><circle cx="14" cy="5.300" r="2" fill="currentColor" stroke="none"/><circle cx="14" cy="14" r="2" fill="currentColor" stroke="none"/><circle cx="14" cy="22.700" r="2" fill="currentColor" stroke="none"/></svg>
<svg style="left:490px;top:1077px;color:#1f1f1f;" width="28" height="28" viewBox="0 0 28 28" fill="none" stroke="currentColor" stroke-width="2.2" stroke-linecap="butt" stroke-linejoin="miter"><path d="M2.500 15.400L16.300 1.300L24.900 2.600L26.200 11.600L12.500 25.700Z" stroke-linejoin="miter"/><circle cx="19.400" cy="8.750" r="1.900" stroke-width="1.500"/></svg>
<div class="t" style="left:537.80px;top:1072px;height:40px;line-height:40px;font-size:28.6px;color:#1f1f1f;-webkit-text-stroke:.25px;letter-spacing:-0.042px;">Executive</div>
<svg style="left:1064px;top:1077px;color:#1f1f1f;" width="28" height="28" viewBox="0 0 28 28" fill="none" stroke="currentColor" stroke-width="2.2" stroke-linecap="butt" stroke-linejoin="miter"><circle cx="14" cy="5.300" r="2" fill="currentColor" stroke="none"/><circle cx="14" cy="14" r="2" fill="currentColor" stroke="none"/><circle cx="14" cy="22.700" r="2" fill="currentColor" stroke="none"/></svg>
<svg style="left:490px;top:1155px;color:#1f1f1f;" width="28" height="28" viewBox="0 0 28 28" fill="none" stroke="currentColor" stroke-width="2.2" stroke-linecap="butt" stroke-linejoin="miter"><path d="M2.500 15.400L16.300 1.300L24.900 2.600L26.200 11.600L12.500 25.700Z" stroke-linejoin="miter"/><circle cx="19.400" cy="8.750" r="1.900" stroke-width="1.500"/></svg>
<div class="t" style="left:537.80px;top:1150px;height:40px;line-height:40px;font-size:28.6px;color:#1f1f1f;-webkit-text-stroke:.25px;letter-spacing:0.278px;">Customer</div>
<svg style="left:1064px;top:1155px;color:#1f1f1f;" width="28" height="28" viewBox="0 0 28 28" fill="none" stroke="currentColor" stroke-width="2.2" stroke-linecap="butt" stroke-linejoin="miter"><circle cx="14" cy="5.300" r="2" fill="currentColor" stroke="none"/><circle cx="14" cy="14" r="2" fill="currentColor" stroke="none"/><circle cx="14" cy="22.700" r="2" fill="currentColor" stroke="none"/></svg>
<svg style="left:490px;top:1233px;color:#1f1f1f;" width="28" height="28" viewBox="0 0 28 28" fill="none" stroke="currentColor" stroke-width="2.2" stroke-linecap="butt" stroke-linejoin="miter"><path d="M2.500 15.400L16.300 1.300L24.900 2.600L26.200 11.600L12.500 25.700Z" stroke-linejoin="miter"/><circle cx="19.400" cy="8.750" r="1.900" stroke-width="1.500"/></svg>
<div class="t" style="left:537.80px;top:1228px;height:40px;line-height:40px;font-size:28.6px;color:#1f1f1f;-webkit-text-stroke:.25px;letter-spacing:0.287px;">Support Specialist</div>
<svg style="left:1064px;top:1233px;color:#1f1f1f;" width="28" height="28" viewBox="0 0 28 28" fill="none" stroke="currentColor" stroke-width="2.2" stroke-linecap="butt" stroke-linejoin="miter"><circle cx="14" cy="5.300" r="2" fill="currentColor" stroke="none"/><circle cx="14" cy="14" r="2" fill="currentColor" stroke="none"/><circle cx="14" cy="22.700" r="2" fill="currentColor" stroke="none"/></svg>
<svg style="left:490px;top:1311px;color:#1f1f1f;" width="28" height="28" viewBox="0 0 28 28" fill="none" stroke="currentColor" stroke-width="2.2" stroke-linecap="butt" stroke-linejoin="miter"><path d="M2.500 15.400L16.300 1.300L24.900 2.600L26.200 11.600L12.500 25.700Z" stroke-linejoin="miter"/><circle cx="19.400" cy="8.750" r="1.900" stroke-width="1.500"/></svg>
<div class="t" style="left:537.80px;top:1306px;height:40px;line-height:40px;font-size:28.6px;color:#1f1f1f;-webkit-text-stroke:.25px;letter-spacing:0.239px;">Support Manager</div>
<svg style="left:1064px;top:1311px;color:#1f1f1f;" width="28" height="28" viewBox="0 0 28 28" fill="none" stroke="currentColor" stroke-width="2.2" stroke-linecap="butt" stroke-linejoin="miter"><circle cx="14" cy="5.300" r="2" fill="currentColor" stroke="none"/><circle cx="14" cy="14" r="2" fill="currentColor" stroke="none"/><circle cx="14" cy="22.700" r="2" fill="currentColor" stroke="none"/></svg>
<div class="t" style="left:1166.00px;top:337px;height:40px;line-height:40px;font-size:28.6px;color:#1677ff;-webkit-text-stroke:.25px;letter-spacing:0.057px;">Permissions</div>
<div class="t" style="left:1385.20px;top:337px;height:40px;line-height:40px;font-size:28.6px;color:#1f1f1f;-webkit-text-stroke:.25px;letter-spacing:0.189px;">Users</div>
<div class="t" style="left:1524.20px;top:337px;height:40px;line-height:40px;font-size:28.6px;color:#1f1f1f;-webkit-text-stroke:.25px;letter-spacing:0.457px;">Departments</div>
<div style="left:1166px;top:393px;width:1654px;height:2px;background:#f0f0f0;"></div>
<div style="left:1166px;top:391px;width:156px;height:4px;background:#1677ff;"></div>
<div style="left:1166px;top:479px;width:1654px;height:2px;background:#f0f0f0;"></div>
<div style="left:1166px;top:411px;width:132px;height:70px;background:#fafafa;border:2px solid #f0f0f0;border-radius:16px 16px 0 0;"></div>
<div class="t" style="left:1184.00px;top:426px;height:40px;line-height:40px;font-size:28.6px;color:#1f1f1f;-webkit-text-stroke:.25px;letter-spacing:0.196px;">System</div>
<div style="left:1302px;top:411px;width:205px;height:70px;background:#fafafa;border:2px solid #f0f0f0;border-radius:16px 16px 0 0;"></div>
<div class="t" style="left:1320.00px;top:426px;height:40px;line-height:40px;font-size:28.6px;color:#1f1f1f;-webkit-text-stroke:.25px;letter-spacing:0.068px;">Data sources</div>
<div style="left:1511px;top:411px;width:234px;height:70px;background:#fafafa;border:2px solid #f0f0f0;border-radius:16px 16px 0 0;"></div>
<div class="t" style="left:1529.00px;top:426px;height:40px;line-height:40px;font-size:28.6px;color:#1f1f1f;-webkit-text-stroke:.25px;letter-spacing:0.428px;">Desktop routes</div>
<div style="left:1749px;top:411px;width:212px;height:70px;background:#fafafa;border:2px solid #f0f0f0;border-radius:16px 16px 0 0;"></div>
<div class="t" style="left:1767.00px;top:426px;height:40px;line-height:40px;font-size:28.6px;color:#1f1f1f;-webkit-text-stroke:.25px;letter-spacing:0.355px;">Mobile routes</div>
<div style="left:1965px;top:411px;width:208px;height:70px;background:#fff;border:2px solid #f0f0f0;border-radius:16px 16px 0 0;border-bottom-color:#fff;"></div>
<div class="t" style="left:1983.00px;top:426px;height:40px;line-height:40px;font-size:28.6px;color:#1677ff;-webkit-text-stroke:.25px;letter-spacing:-0.120px;">AI employees</div>
<div class="t" style="left:1165.79px;top:499px;height:40px;line-height:40px;font-size:28.6px;color:#1f1f1f;font-weight:700;letter-spacing:-0.368px;">AI employee permissions</div>
<div class="t" style="left:1505.98px;top:499px;height:40px;line-height:40px;font-size:28.6px;color:#1f1f1f;font-weight:700;">:</div>
<div style="left:1166px;top:553px;width:28px;height:28px;background:#fff;border:2px solid #d9d9d9;border-radius:8px;"></div>
<div class="t" style="left:1201.60px;top:547px;height:40px;line-height:40px;font-size:28.6px;color:#1f1f1f;-webkit-text-stroke:.25px;letter-spacing:0.130px;">New AI employees are allowed to be used by default</div>
<div style="left:1166px;top:617px;width:1654px;height:76px;background:#fafafa;border-radius:16px 16px 0 0;"></div>
<div style="left:1166px;top:693px;width:1654px;height:2px;background:#f0f0f0;"></div>
<div style="left:1291px;top:632.4px;width:2px;height:44px;background:#f0f0f0;"></div>
<div style="left:1469px;top:632.4px;width:2px;height:44px;background:#f0f0f0;"></div>
<div style="left:1651px;top:632.4px;width:2px;height:44px;background:#f0f0f0;"></div>
<div style="left:2017.3px;top:632.4px;width:2px;height:44px;background:#f0f0f0;"></div>
<div style="left:2617px;top:632.4px;width:2px;height:44px;background:#f0f0f0;"></div>
<div class="t" style="left:1182.00px;top:635px;height:40px;line-height:40px;font-size:28.6px;color:#1f1f1f;font-weight:700;letter-spacing:-0.303px;">Avatar</div>
<div class="t" style="left:1309.00px;top:635px;height:40px;line-height:40px;font-size:28.6px;color:#1f1f1f;font-weight:700;letter-spacing:-0.097px;">Nickname</div>
<div class="t" style="left:1486.80px;top:635px;height:40px;line-height:40px;font-size:28.6px;color:#1f1f1f;font-weight:700;letter-spacing:0.054px;">Username</div>
<div class="t" style="left:1668.70px;top:635px;height:40px;line-height:40px;font-size:28.6px;color:#1f1f1f;font-weight:700;letter-spacing:-0.344px;">Position</div>
<div class="t" style="left:2034.70px;top:635px;height:40px;line-height:40px;font-size:28.6px;color:#1f1f1f;font-weight:700;letter-spacing:0.462px;">Model</div>
<div style="left:2635px;top:641px;width:28px;height:28px;background:#fff;border:2px solid #d9d9d9;border-radius:8px;"></div>
<div class="t" style="left:2669.68px;top:635px;height:40px;line-height:40px;font-size:28.6px;color:#1f1f1f;font-weight:700;letter-spacing:-0.423px;">Available</div>
<div style="left:1166px;top:783px;width:1654px;height:2px;background:#f0f0f0;"></div>
<svg style="left:1184px;top:713px;border-radius:50%;overflow:hidden;background:#bcbffb" width="52" height="52" viewBox="0 0 52 52"><path d="M8.600 52V46C9.200 42 11 39.600 14 38L21.600 33.800V25H30.900V33.800L38.400 38C41.400 39.600 43 42 43.600 46V52Z" fill="#2a22f5"/><path d="M22 7.700C24 6.400 29 6 31.600 8.200C32.800 9.200 33.300 10.400 33.700 11.100C35.600 11.500 37.100 12.600 37.700 14.200C38.500 16.400 38 19 37.900 22L39.600 29.500L34.900 29.800L21.200 30.800L12.800 29.500C14.200 27.500 15.200 25.500 15.300 23.300L15.500 17.800C15.700 15.300 16.300 13.300 17.400 11.900C18.600 10.200 20.200 8.700 22 7.700Z" fill="#050505"/><path d="M21.600 18.800L24.400 18.600C25 16.800 25.300 15 25.400 13.200C28.500 15 32 15.600 35.400 15.700L35.200 27.900C34.500 29.700 33 30.900 30.800 31.600L22 32V23.200C20.400 23.200 19.200 22.100 19.200 20.700C19.200 19.400 20.300 18.500 21.600 18.800Z" fill="#2a22f5"/><rect x="19.700" y="23.400" width="1.300" height="3" rx=".5" fill="#fff"/><path d="M25.700 28.500C27.100 30 28.900 31 30.700 31.500" stroke="#0b0b0b" stroke-width="1.500" fill="none" stroke-linecap="round"/><path d="M29.400 26.300L30.300 27.200H33.600" stroke="#fff" stroke-width=".8" fill="none" stroke-linecap="round" opacity=".9"/><path d="M32.900 35.400C29 40 22 43.500 14.400 44.600V49.500M33.900 37.700C29.500 42.400 22 46 15.300 47.200M37.500 37.500V49.500" stroke="#0b0b0b" stroke-width=".95" fill="none" stroke-linecap="round" stroke-linejoin="round"/></svg>
<div class="t" style="left:1309.00px;top:720px;height:40px;line-height:40px;font-size:28.6px;color:#1f1f1f;-webkit-text-stroke:.25px;letter-spacing:-0.236px;">Avery</div>
<div class="t" style="left:1486.80px;top:720px;height:40px;line-height:40px;font-size:28.6px;color:#1f1f1f;-webkit-text-stroke:.25px;letter-spacing:-0.007px;">avery</div>
<div class="t" style="left:1668.70px;top:720px;height:40px;line-height:40px;font-size:28.6px;color:#1f1f1f;-webkit-text-stroke:.25px;letter-spacing:0.340px;">Form filler</div>
<div style="left:2035px;top:717px;width:111px;height:44px;background:#fafafa;border:2px solid #d9d9d9;border-radius:8px;"></div>
<div class="t" style="left:2051.00px;top:723px;height:34px;line-height:34px;font-size:24.5px;color:#1f1f1f;-webkit-text-stroke:.25px;letter-spacing:1.885px;">gpt-4o</div>
<div style="left:2635px;top:725px;width:28px;height:28px;background:#fff;border:2px solid #d9d9d9;border-radius:8px;"></div>
<div style="left:1166px;top:873px;width:1654px;height:2px;background:#f0f0f0;"></div>
<svg style="left:1184px;top:803px;border-radius:50%;overflow:hidden;background:#e0d3d1" width="52" height="52" viewBox="0 0 52 52"><path d="M8.600 52V46C9.200 42 11 39.600 14 38L21.600 33.800V25H30.900V33.800L38.400 38C41.400 39.600 43 42 43.600 46V52Z" fill="#80685f"/><path d="M27.300 7.100C35 7.100 41.100 12.500 41.100 19.400C41.100 24.200 38.400 28.600 34.200 31.200L21 31.200C16.200 28.600 13.400 24.200 13.400 19.400C13.400 12.500 19.500 7.100 27.300 7.100Z" fill="#050505"/><path d="M21.600 18.800L24.300 18.800C24.900 17.800 25.200 16.800 25.400 15.700C28.500 16.800 32.500 16.900 35.800 16.500L35.200 27.900C34.500 29.700 33 30.900 30.800 31.600L22 32V23.200C20.400 23.200 19.200 22.100 19.200 20.700C19.200 19.400 20.300 18.500 21.600 18.800Z" fill="#80685f"/><path d="M25.700 28.500C27.100 30 28.900 31 30.700 31.500" stroke="#0b0b0b" stroke-width="1.500" fill="none" stroke-linecap="round"/><path d="M29.400 26.300L30.300 27.200H33.600" stroke="#fff" stroke-width=".8" fill="none" stroke-linecap="round" opacity=".9"/><path d="M19.500 35.800C18.100 38.400 18.800 41 21.200 41.600C23.500 42 25.300 40.500 25.800 38.300C26.400 40.500 28.300 42 30.600 41.600C33 41 33.800 38.400 32.900 35.800" stroke="#0b0b0b" stroke-width=".95" fill="none" stroke-linecap="round" stroke-linejoin="round"/></svg>
<div class="t" style="left:1309.00px;top:810px;height:40px;line-height:40px;font-size:28.6px;color:#1f1f1f;-webkit-text-stroke:.25px;letter-spacing:-0.076px;">Cole</div>
<div class="t" style="left:1486.80px;top:810px;height:40px;line-height:40px;font-size:28.6px;color:#1f1f1f;-webkit-text-stroke:.25px;letter-spacing:0.588px;">cole</div>
<div class="t" style="left:1668.70px;top:810px;height:40px;line-height:40px;font-size:28.6px;color:#1f1f1f;-webkit-text-stroke:.25px;letter-spacing:0.209px;">NocoBase Assistant</div>
<div style="left:2035px;top:807px;width:309px;height:44px;background:#fafafa;border:2px solid #d9d9d9;border-radius:8px;"></div>
<div class="t" style="left:2051.00px;top:813px;height:34px;line-height:34px;font-size:24.5px;color:#1f1f1f;-webkit-text-stroke:.25px;letter-spacing:0.786px;">models/gemini-2.5-flash</div>
<div style="left:2635px;top:815px;width:28px;height:28px;background:#fff;border:2px solid #d9d9d9;border-radius:8px;"></div>
<div style="left:1166px;top:963px;width:1654px;height:2px;background:#f0f0f0;"></div>
<svg style="left:1184px;top:893px;border-radius:50%;overflow:hidden;background:#bcbffb" width="52" height="52" viewBox="0 0 52 52"><path d="M8.600 52V46C9.200 42 11 39.600 14 38L21.600 33.800V25H30.900V33.800L38.400 38C41.400 39.600 43 42 43.600 46V52Z" fill="#2a22f5"/><path d="M24.500 17H36.200L35.600 28L33 31L25 31L22 26V20Z" fill="#2a22f5"/><path d="M15.300 14.400L22 12.400L25.400 11.100L31.600 10L39.200 10.300L37.900 12.800L39.600 14L37.500 17L24.500 17L24.200 20L23.600 24L21.200 25.400L17.400 22.800L18.300 21L16.500 19.500L17.600 17.500Z" fill="#050505" stroke="#050505" stroke-width=".8" stroke-linejoin="round"/><path d="M21.600 24.200L24.700 25.200L27.900 28.300H35.600L35.400 30.400L29.500 31.300L25.400 29.200L21.800 26Z" fill="#050505" stroke="#050505" stroke-width=".8" stroke-linejoin="round"/><path d="M29.100 26.300L30 27.200H33.700" stroke="#fff" stroke-width=".8" fill="none" stroke-linecap="round"/><circle cx="28" cy="20.300" r="3.200" stroke="#dcdcff" stroke-width=".7" fill="none"/><circle cx="34.600" cy="20.300" r="3" stroke="#dcdcff" stroke-width=".7" fill="none"/><path d="M21.200 20.300H24.800" stroke="#dcdcff" stroke-width=".7"/><circle cx="20.500" cy="20.300" r=".9" fill="#fff"/><path d="M18.200 35.800L20.700 43.600M32.900 35.800L30.400 43.600M12.400 38.800L15.700 43.800V50M39.600 38.800L35.400 43.800V50M15.700 43.800H35.400" stroke="#0b0b0b" stroke-width=".95" fill="none" stroke-linecap="round" stroke-linejoin="round"/><path d="M15.700 44.400H35.400" stroke="#000" stroke-opacity=".25" stroke-width="1.200"/></svg>
<div class="t" style="left:1309.00px;top:900px;height:40px;line-height:40px;font-size:28.6px;color:#1f1f1f;-webkit-text-stroke:.25px;letter-spacing:-0.811px;">Dex</div>
<div class="t" style="left:1486.80px;top:900px;height:40px;line-height:40px;font-size:28.6px;color:#1f1f1f;-webkit-text-stroke:.25px;letter-spacing:-0.711px;">Dex</div>
<div class="t" style="left:1668.70px;top:900px;height:40px;line-height:40px;font-size:28.6px;color:#1f1f1f;-webkit-text-stroke:.25px;letter-spacing:0.006px;">Data Organizer</div>
<div style="left:2035px;top:897px;width:309px;height:44px;background:#fafafa;border:2px solid #d9d9d9;border-radius:8px;"></div>
<div class="t" style="left:2051.00px;top:903px;height:34px;line-height:34px;font-size:24.5px;color:#1f1f1f;-webkit-text-stroke:.25px;letter-spacing:0.786px;">models/gemini-2.5-flash</div>
<div style="left:2635px;top:905px;width:28px;height:28px;background:#fff;border:2px solid #d9d9d9;border-radius:8px;"></div>
<div style="left:1166px;top:1053px;width:1654px;height:2px;background:#f0f0f0;"></div>
<svg style="left:1184px;top:983px;border-radius:50%;overflow:hidden;background:#ffebcb" width="52" height="52" viewBox="0 0 52 52"><path d="M8.600 52V46C9.200 42 11 39.600 14 38L21.600 33.800V25H30.900V33.800L38.400 38C41.400 39.600 43 42 43.600 46V52Z" fill="#ffb800"/><circle cx="19.900" cy="11.500" r="2.900" fill="#050505"/><path d="M19.500 13L23.300 12.800C24.500 11.600 26 11.300 27.400 11.500C29 10.800 30.500 10.800 31.600 11.100C33.300 11.300 34.500 12.400 35 13.600C36 14.700 36.400 15.900 36.300 17L35.800 19L21.800 21L21.600 27.700H14V26.200L16.500 19.500Z" fill="#050505"/><path d="M21.200 18.600L25.400 18.600L26.600 16.100C27.500 17 28.600 17.200 29.500 17C30.600 17.100 31.900 16.800 32.900 16.100C33.800 16.900 34.800 17.100 35.800 17L35.200 27.900C34.500 29.700 33 30.900 30.800 31.600L22 32V23.200C20.400 23.200 19.200 22.100 19.200 20.700C19.200 19.400 20.300 18.500 21.600 18.800Z" fill="#ffb800"/><path d="M25.700 28.500C27.100 30 28.900 31 30.700 31.500" stroke="#0b0b0b" stroke-width="1.500" fill="none" stroke-linecap="round"/><path d="M29.400 26.300L30.300 27.200H33.600" stroke="#fff" stroke-width=".8" fill="none" stroke-linecap="round" opacity=".9"/><path d="M19.500 33.300C16 34.200 13.500 35.500 13.600 37.100C13.600 38.600 14.200 39.900 14.900 40.900C16.600 42.400 19 43.400 21.200 44.200L25.400 45.500M32 33.300C35 33.900 37 34.800 37.500 35.800C38 36.900 38 37.900 37.900 38.800C36.800 40.200 35.300 41.200 33.700 42.100L29.100 44.200L25.800 45.500M18.200 36.200L25.400 44.600L32 36.200M21.600 44.400L21.200 49.700M29.500 43.600L30 49.700" stroke="#0b0b0b" stroke-width=".95" fill="none" stroke-linecap="round" stroke-linejoin="round"/><path d="M18 34.700L20.800 34L20.500 39.200ZM33.200 34.700L30.800 34L31.200 39Z" fill="#0b0b0b"/></svg>
<div class="t" style="left:1309.00px;top:990px;height:40px;line-height:40px;font-size:28.6px;color:#1f1f1f;-webkit-text-stroke:.25px;letter-spacing:-0.460px;">Lexi</div>
<div class="t" style="left:1486.80px;top:990px;height:40px;line-height:40px;font-size:28.6px;color:#1f1f1f;-webkit-text-stroke:.25px;letter-spacing:0.053px;">lexi</div>
<div class="t" style="left:1668.70px;top:990px;height:40px;line-height:40px;font-size:28.6px;color:#1f1f1f;-webkit-text-stroke:.25px;letter-spacing:0.259px;">Translator</div>
<div style="left:2035px;top:987px;width:519.7px;height:44px;background:#fafafa;border:2px solid #d9d9d9;border-radius:8px;"></div>
<div class="t" style="left:2051.00px;top:993px;height:34px;line-height:34px;font-size:24.5px;color:#1f1f1f;-webkit-text-stroke:.25px;letter-spacing:0.971px;">models/gemini-2.5-flash-preview-09-2025</div>
<div style="left:2635px;top:995px;width:28px;height:28px;background:#fff;border:2px solid #d9d9d9;border-radius:8px;"></div>
<div style="left:1166px;top:1143px;width:1654px;height:2px;background:#f0f0f0;"></div>
<svg style="left:1184px;top:1073px;border-radius:50%;overflow:hidden;background:#ffebcb" width="52" height="52" viewBox="0 0 52 52"><path d="M8.600 52V46C9.200 42 11 39.600 14 38L21.600 33.800V25H30.900V33.800L38.400 38C41.400 39.600 43 42 43.600 46V52Z" fill="#ffb800"/><path d="M27 1.900C29.500 1.700 31.800 2.700 33.700 4.400C35.800 5.200 37.200 6.700 37.900 8.600C39.500 10.400 40.200 12.600 40 14.900C40.400 17.200 40 19.300 39.200 21.200C38.600 22.500 37.500 23.200 36.300 23.300L22 27L20.700 26.600C19.300 26.700 18 26.200 17 25.400C15.200 24.800 13.700 23.600 12.800 22C11.700 19.800 11.400 17.300 11.900 14.900C12 12.500 12.700 10.400 14 8.600C15.300 6.500 17.200 4.900 19.500 4C21.800 2.600 24.400 1.900 27 1.900Z" fill="#050505" stroke="#050505" stroke-width="1.200" stroke-linejoin="round" stroke-dasharray="2.200 .8"/><path d="M27 1.900C29.500 1.700 31.800 2.700 33.700 4.400C35.800 5.200 37.200 6.700 37.900 8.600C39.500 10.400 40.200 12.600 40 14.900C40.400 17.200 40 19.300 39.200 21.200C38.600 22.500 37.500 23.200 36.300 23.300L22 27L20.700 26.600C19.300 26.700 18 26.200 17 25.400C15.200 24.800 13.700 23.600 12.800 22C11.700 19.800 11.400 17.300 11.900 14.900C12 12.500 12.700 10.400 14 8.600C15.300 6.500 17.200 4.900 19.500 4C21.800 2.600 24.400 1.900 27 1.900Z" fill="#050505"/><path d="M21.600 18.800L24.100 17.800C24.800 16.500 25.200 15.100 25.400 13.600C26.400 14.500 27.500 15 28.700 15.300C31 16 33.500 16.200 35.800 16.100L35.200 27.900C34.500 29.700 33 30.900 30.800 31.600L22 32V23.200C20.400 23.200 19.200 22.100 19.200 20.700C19.200 19.400 20.300 18.500 21.600 18.800Z" fill="#ffb800"/><rect x="19.900" y="19.900" width="1.200" height="2.700" rx=".6" fill="#fff"/><path d="M25.700 28.500C27.100 30 28.900 31 30.700 31.500" stroke="#0b0b0b" stroke-width="1.500" fill="none" stroke-linecap="round"/><path d="M29.400 26.300L30.300 27.200H33.600" stroke="#fff" stroke-width=".8" fill="none" stroke-linecap="round" opacity=".9"/><path d="M18.200 35.800L20.700 43.600M32.900 35.800L30.400 43.600M12.400 38.800L15.700 43.800V50M39.600 38.800L35.400 43.800V50M15.700 43.800H35.400" stroke="#0b0b0b" stroke-width=".95" fill="none" stroke-linecap="round" stroke-linejoin="round"/><path d="M15.700 44.400H35.400" stroke="#000" stroke-opacity=".25" stroke-width="1.200"/><path d="M21.300 24.500C21.600 27.500 22.400 29.700 23.300 31.600C24.800 34 26.600 35.900 28.400 37.600M33.300 30.400C32 33.200 30.300 35.600 28.400 37.600V50" stroke="#fff7e8" stroke-width=".9" fill="none" stroke-linecap="round"/></svg>
<div class="t" style="left:1309.00px;top:1080px;height:40px;line-height:40px;font-size:28.6px;color:#1f1f1f;-webkit-text-stroke:.25px;letter-spacing:-0.084px;">Max</div>
<div class="t" style="left:1486.80px;top:1080px;height:40px;line-height:40px;font-size:28.6px;color:#1f1f1f;-webkit-text-stroke:.25px;letter-spacing:-0.134px;">max</div>
<div class="t" style="left:1668.70px;top:1080px;height:40px;line-height:40px;font-size:28.6px;color:#1f1f1f;-webkit-text-stroke:.25px;letter-spacing:0.382px;">Contract reviewer</div>
<div style="left:2035px;top:1077px;width:309px;height:44px;background:#fafafa;border:2px solid #d9d9d9;border-radius:8px;"></div>
<div class="t" style="left:2051.00px;top:1083px;height:34px;line-height:34px;font-size:24.5px;color:#1f1f1f;-webkit-text-stroke:.25px;letter-spacing:0.786px;">models/gemini-2.5-flash</div>
<div style="left:2635px;top:1085px;width:28px;height:28px;background:#fff;border:2px solid #d9d9d9;border-radius:8px;"></div>
<div style="left:1166px;top:1233px;width:1654px;height:2px;background:#f0f0f0;"></div>
<svg style="left:1184px;top:1163px;border-radius:50%;overflow:hidden;background:#e5cff4" width="52" height="52" viewBox="0 0 52 52"><path d="M8.600 52V46C9.200 42 11 39.600 14 38L21.600 33.800V25H30.900V33.800L38.400 38C41.400 39.600 43 42 43.600 46V52Z" fill="#a452d4"/><path d="M16.100 17C16 14.500 17.100 12.300 19.100 10.700C20.400 9 22.300 7.900 24.500 7.700C26.200 7.200 28 7.500 29.500 8.200C31.700 8.700 33.500 9.800 34.600 11.500C35.600 12.700 36 14.200 35.800 15.700L35.800 17L25.400 18.500L23 23L21.200 25.400C19.300 24.800 18 23.600 17.400 22C16.400 20.500 16 18.800 16.100 17Z" fill="#050505"/><path d="M22 22L25.400 17.800L35.800 16L35.200 27.900C34.500 29.700 33 30.900 30.800 31.600L22 32Z" fill="#a452d4"/><rect x="25.400" y="17.800" width="4.300" height="4.200" rx=".8" stroke="#efe2fa" stroke-width=".7" fill="none"/><rect x="31.600" y="17" width="4.700" height="4.200" rx=".8" stroke="#efe2fa" stroke-width=".7" fill="none"/><path d="M21 20.300H25.400M29.700 19.600H31.600" stroke="#efe2fa" stroke-width=".7"/><circle cx="20.400" cy="20.300" r=".9" fill="#fff"/><path d="M25.700 28.500C27.100 30 28.900 31 30.700 31.500" stroke="#0b0b0b" stroke-width="1.500" fill="none" stroke-linecap="round"/><path d="M29.400 26.300L30.300 27.200H33.600" stroke="#fff" stroke-width=".8" fill="none" stroke-linecap="round" opacity=".9"/><path d="M17.800 36.200C13.500 37.800 10 40.500 8.200 44.600M33.700 36.200C38.500 37.800 42.400 40.200 44.600 44.200M19.500 35L24.700 37.500L20.300 39.200ZM32 35L26.800 37.500L30.800 39.200ZM24.700 37.500H26.800M19.800 34V37.500L18.200 38L23.300 51.500M32 34V37.500L33.300 38L28.700 51.500" stroke="#0b0b0b" stroke-width=".95" fill="none" stroke-linecap="round" stroke-linejoin="round"/></svg>
<div class="t" style="left:1309.00px;top:1170px;height:40px;line-height:40px;font-size:28.6px;color:#1f1f1f;-webkit-text-stroke:.25px;letter-spacing:0.176px;">Nathan</div>
<div class="t" style="left:1486.80px;top:1170px;height:40px;line-height:40px;font-size:28.6px;color:#1f1f1f;-webkit-text-stroke:.25px;letter-spacing:0.540px;">nathan</div>
<div class="t" style="left:1668.70px;top:1170px;height:40px;line-height:40px;font-size:28.6px;color:#1f1f1f;-webkit-text-stroke:.25px;letter-spacing:0.224px;">Frontend code engineer</div>
<div style="left:2035px;top:1167px;width:291.7px;height:44px;background:#fafafa;border:2px solid #d9d9d9;border-radius:8px;"></div>
<div class="t" style="left:2051.00px;top:1173px;height:34px;line-height:34px;font-size:24.5px;color:#1f1f1f;-webkit-text-stroke:.25px;letter-spacing:0.790px;">models/gemini-2.5-pro</div>
<div style="left:2635px;top:1175px;width:28px;height:28px;background:#fff;border:2px solid #d9d9d9;border-radius:8px;"></div>
<div style="left:1166px;top:1323px;width:1654px;height:2px;background:#f0f0f0;"></div>
<svg style="left:1184px;top:1253px;border-radius:50%;overflow:hidden;background:#ffebcb" width="52" height="52" viewBox="0 0 52 52"><path d="M8.600 52V46C9.200 42 11 39.600 14 38L21.600 33.800V25H30.900V33.800L38.400 38C41.400 39.600 43 42 43.600 46V52Z" fill="#ffb800"/><path d="M27 1.900C29.500 1.700 31.800 2.700 33.700 4.400C35.800 5.200 37.200 6.700 37.900 8.600C39.500 10.400 40.200 12.600 40 14.900C40.400 17.200 40 19.300 39.200 21.200C38.600 22.500 37.500 23.200 36.300 23.300L22 27L20.700 26.600C19.300 26.700 18 26.200 17 25.400C15.200 24.800 13.700 23.600 12.800 22C11.700 19.800 11.400 17.300 11.900 14.900C12 12.500 12.700 10.400 14 8.600C15.300 6.500 17.200 4.900 19.500 4C21.800 2.600 24.400 1.900 27 1.900Z" fill="#050505" stroke="#050505" stroke-width="1.200" stroke-linejoin="round" stroke-dasharray="2.200 .8"/><path d="M27 1.900C29.500 1.700 31.800 2.700 33.700 4.400C35.800 5.200 37.200 6.700 37.900 8.600C39.500 10.400 40.200 12.600 40 14.900C40.400 17.200 40 19.300 39.200 21.200C38.600 22.500 37.500 23.200 36.300 23.300L22 27L20.700 26.600C19.300 26.700 18 26.200 17 25.400C15.200 24.800 13.700 23.600 12.800 22C11.700 19.800 11.400 17.300 11.900 14.900C12 12.500 12.700 10.400 14 8.600C15.300 6.500 17.200 4.900 19.500 4C21.800 2.600 24.400 1.900 27 1.900Z" fill="#050505"/><path d="M21.600 18.800L24.100 17.800C24.800 16.500 25.200 15.100 25.400 13.600C26.400 14.500 27.500 15 28.700 15.300C31 16 33.500 16.200 35.800 16.100L35.200 27.900C34.500 29.700 33 30.900 30.800 31.600L22 32V23.200C20.400 23.200 19.200 22.100 19.200 20.700C19.200 19.400 20.300 18.500 21.600 18.800Z" fill="#ffb800"/><rect x="19.900" y="19.900" width="1.200" height="2.700" rx=".6" fill="#fff"/><path d="M25.700 28.500C27.100 30 28.900 31 30.700 31.500" stroke="#0b0b0b" stroke-width="1.500" fill="none" stroke-linecap="round"/><path d="M29.400 26.300L30.300 27.200H33.600" stroke="#fff" stroke-width=".8" fill="none" stroke-linecap="round" opacity=".9"/><path d="M18.200 35.800L20.700 43.600M32.900 35.800L30.400 43.600M12.400 38.800L15.700 43.800V50M39.600 38.800L35.400 43.800V50M15.700 43.800H35.400" stroke="#0b0b0b" stroke-width=".95" fill="none" stroke-linecap="round" stroke-linejoin="round"/><path d="M15.700 44.400H35.400" stroke="#000" stroke-opacity=".25" stroke-width="1.200"/><path d="M21.300 24.500C21.600 27.500 22.400 29.700 23.300 31.600C24.800 34 26.600 35.900 28.400 37.600M33.300 30.400C32 33.200 30.300 35.600 28.400 37.600V50" stroke="#fff7e8" stroke-width=".9" fill="none" stroke-linecap="round"/></svg>
<div class="t" style="left:1309.00px;top:1260px;height:40px;line-height:40px;font-size:28.6px;color:#1f1f1f;-webkit-text-stroke:.25px;letter-spacing:-0.013px;">Orin</div>
<div class="t" style="left:1486.80px;top:1260px;height:40px;line-height:40px;font-size:28.6px;color:#1f1f1f;-webkit-text-stroke:.25px;letter-spacing:0.566px;">orin</div>
<div class="t" style="left:1668.70px;top:1260px;height:40px;line-height:40px;font-size:28.6px;color:#1f1f1f;-webkit-text-stroke:.25px;letter-spacing:0.234px;">Data modeling assistant</div>
<div style="left:2035px;top:1257px;width:111px;height:44px;background:#fafafa;border:2px solid #d9d9d9;border-radius:8px;"></div>
<div class="t" style="left:2051.00px;top:1263px;height:34px;line-height:34px;font-size:24.5px;color:#1f1f1f;-webkit-text-stroke:.25px;letter-spacing:1.885px;">gpt-4o</div>
<div style="left:2635px;top:1265px;width:28px;height:28px;background:#fff;border:2px solid #d9d9d9;border-radius:8px;"></div>
<div style="left:1166px;top:1413px;width:1654px;height:2px;background:#f0f0f0;"></div>
<svg style="left:1184px;top:1343px;border-radius:50%;overflow:hidden;background:#e5cff4" width="52" height="52" viewBox="0 0 52 52"><path d="M8.600 52V46C9.200 42 11 39.600 14 38L21.600 33.800V25H30.900V33.800L38.400 38C41.400 39.600 43 42 43.600 46V52Z" fill="#a452d4"/><path d="M16.100 16.100C16.300 13.800 17.100 11.800 18.600 10.300C19.700 9.100 21.200 8.400 22.800 8.200C24.500 7.900 26.300 8.100 27.900 8.600L33.700 10.700C34.900 11.100 36 11.300 37.100 11.500C37.600 12.100 37.700 12.900 37.500 13.600C37.200 14.700 36.600 15.500 35.800 16.100L26 18L22 24L19.500 26.200C18.300 24.400 17.500 22.400 17 20.300C16.500 18.900 16.200 17.500 16.100 16.100Z" fill="#050505"/><path d="M20.700 18.600L23.700 19.500C24.500 18.800 25 17.900 25.400 17C29 17.100 32.500 16.800 35.800 16.100L35.200 27.900C34.500 29.700 33 30.900 30.800 31.600L22 32V23.200C20.400 23.200 19.200 22.100 19.200 20.700C19.200 19.400 20.300 18.500 21.600 18.800Z" fill="#a452d4"/><path d="M25.700 28.500C27.100 30 28.900 31 30.700 31.500" stroke="#0b0b0b" stroke-width="1.500" fill="none" stroke-linecap="round"/><path d="M29.400 26.300L30.300 27.200H33.600" stroke="#fff" stroke-width=".8" fill="none" stroke-linecap="round" opacity=".9"/><path d="M16.100 36.500H19.500V43.600H16.100ZM32 36.500H35.400V43.600H32Z" fill="#000" fill-opacity=".28"/><path d="M15.300 45.500H17.800L18.300 50H15.700ZM36.300 45.500H33.700L33.200 50H35.900Z" fill="#000" fill-opacity=".28"/><path d="M19.500 35.800V43.600M32.300 35.800V43.600M16.300 43.600H35.400" stroke="#140a1e" stroke-width="1" fill="none"/><path d="M16.800 44.200L18.600 46.400L19.300 44.600ZM34.700 44.200L32.900 46.400L32.300 44.600Z" fill="#140a1e"/></svg>
<div class="t" style="left:1309.00px;top:1350px;height:40px;line-height:40px;font-size:28.6px;color:#1f1f1f;-webkit-text-stroke:.25px;letter-spacing:-0.305px;">Vera</div>
<div class="t" style="left:1486.80px;top:1350px;height:40px;line-height:40px;font-size:28.6px;color:#1f1f1f;-webkit-text-stroke:.25px;letter-spacing:-0.190px;">vera</div>
<div class="t" style="left:1668.70px;top:1350px;height:40px;line-height:40px;font-size:28.6px;color:#1f1f1f;-webkit-text-stroke:.25px;letter-spacing:0.039px;">Research Analyst</div>
<div style="left:2035px;top:1347px;width:95px;height:44px;background:#fafafa;border:2px solid #d9d9d9;border-radius:8px;"></div>
<div class="t" style="left:2051.00px;top:1353px;height:34px;line-height:34px;font-size:24.5px;color:#1f1f1f;-webkit-text-stroke:.25px;letter-spacing:1.755px;">gpt-5</div>
<div style="left:2635px;top:1355px;width:28px;height:28px;background:#fff;border:2px solid #d9d9d9;border-radius:8px;"></div>
<div style="left:1166px;top:1503px;width:1654px;height:2px;background:#f0f0f0;"></div>
<svg style="left:1184px;top:1433px;border-radius:50%;overflow:hidden;background:#e5cff4" width="52" height="52" viewBox="0 0 52 52"><path d="M8.600 52V46C9.200 42 11 39.600 14 38L21.600 33.800V25H30.900V33.800L38.400 38C41.400 39.600 43 42 43.600 46V52Z" fill="#a452d4"/><path d="M17.600 14L19.500 12.200C24 11 31 10.200 36.800 8.600C38.200 9.700 38.800 11.200 38.600 12.800C38.300 14.500 37.500 15.900 36.200 17L25 18.500L22 23L20 23C18.800 21 18 18.500 18.200 15.800Z" fill="#050505" stroke="#050505" stroke-width=".7" stroke-linejoin="round"/><path d="M22 22.500L22.400 18.200L36.200 17L35.200 27.900C34.500 29.700 33 30.900 30.800 31.600L22 32Z" fill="#a452d4"/><rect x="23.600" y="18" width="6" height="4" rx=".8" stroke="#efe2fa" stroke-width=".7" fill="none"/><rect x="31.400" y="17.800" width="5.400" height="4" rx=".8" stroke="#efe2fa" stroke-width=".7" fill="none"/><path d="M20 20.600H23.600M29.600 19.800H31.400" stroke="#efe2fa" stroke-width=".7"/><path d="M25.700 28.500C27.100 30 28.900 31 30.700 31.500" stroke="#0b0b0b" stroke-width="1.500" fill="none" stroke-linecap="round"/><path d="M29.400 26.300L30.300 27.200H33.600" stroke="#fff" stroke-width=".8" fill="none" stroke-linecap="round" opacity=".9"/><path d="M16.100 36.500H19.500V43.600H16.100ZM32 36.500H35.400V43.600H32Z" fill="#000" fill-opacity=".28"/><path d="M15.300 45.500H17.800L18.300 50H15.700ZM36.300 45.500H33.700L33.200 50H35.900Z" fill="#000" fill-opacity=".28"/><path d="M19.500 35.800V43.600M32.300 35.800V43.600M16.300 43.600H35.400" stroke="#140a1e" stroke-width="1" fill="none"/><path d="M16.800 44.200L18.600 46.400L19.300 44.600ZM34.700 44.200L32.900 46.400L32.300 44.600Z" fill="#140a1e"/></svg>
<div class="t" style="left:1309.00px;top:1440px;height:40px;line-height:40px;font-size:28.6px;color:#1f1f1f;-webkit-text-stroke:.25px;letter-spacing:0.202px;">Viz</div>
<div class="t" style="left:1486.80px;top:1440px;height:40px;line-height:40px;font-size:28.6px;color:#1f1f1f;-webkit-text-stroke:.25px;letter-spacing:0.597px;">viz</div>
<div class="t" style="left:1668.70px;top:1440px;height:40px;line-height:40px;font-size:28.6px;color:#1f1f1f;-webkit-text-stroke:.25px;letter-spacing:0.365px;">Insights Analyst</div>
<div style="left:2035px;top:1437px;width:309px;height:44px;background:#fafafa;border:2px solid #d9d9d9;border-radius:8px;"></div>
<div class="t" style="left:2051.00px;top:1443px;height:34px;line-height:34px;font-size:24.5px;color:#1f1f1f;-webkit-text-stroke:.25px;letter-spacing:0.786px;">models/gemini-2.5-flash</div>
<div style="left:2635px;top:1445px;width:28px;height:28px;background:#fff;border:2px solid #d9d9d9;border-radius:8px;"></div>
</body></html>
